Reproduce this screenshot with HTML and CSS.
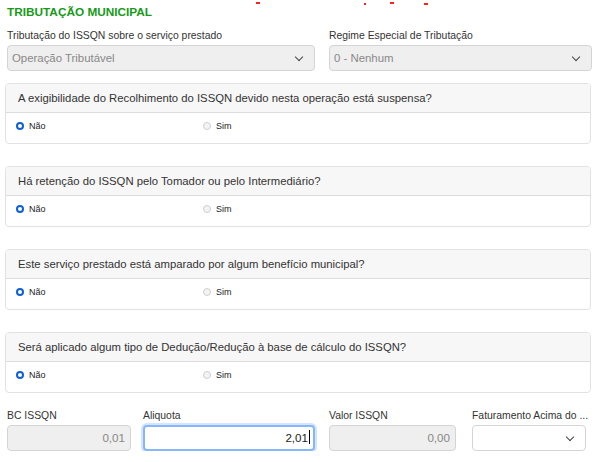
FILE: index.html
```html
<!DOCTYPE html>
<html>
	<head>
		<meta charset="utf-8">
		<title>Tributação Municipal</title>
		<link rel="stylesheet" href="styles.css">
	</head>
	<body>
		<div class="cut">
			<i class="d1"></i><i class="d2"></i><i class="d3"></i><i class="d4"></i>
		</div>
		<h3 class="titulo">TRIBUTAÇÃO MUNICIPAL</h3>

		<div class="linha1">
			<div class="campo">
				<label>Tributação do ISSQN sobre o serviço prestado</label>
				<div class="select disabled">Operação Tributável<span class="seta"></span></div>
			</div>
			<div class="campo">
				<label>Regime Especial de Tributação</label>
				<div class="select disabled">0 - Nenhum<span class="seta"></span></div>
			</div>
		</div>

		<div class="card">
			<div class="card-header">A exigibilidade do Recolhimento do ISSQN devido nesta operação está suspensa?</div>
			<div class="card-body">
				<span class="opt"><i class="radio on"></i>Não</span>
				<span class="opt"><i class="radio"></i>Sim</span>
			</div>
		</div>

		<div class="card">
			<div class="card-header">Há retenção do ISSQN pelo Tomador ou pelo Intermediário?</div>
			<div class="card-body">
				<span class="opt"><i class="radio on"></i>Não</span>
				<span class="opt"><i class="radio"></i>Sim</span>
			</div>
		</div>

		<div class="card">
			<div class="card-header">Este serviço prestado está amparado por algum benefício municipal?</div>
			<div class="card-body">
				<span class="opt"><i class="radio on"></i>Não</span>
				<span class="opt"><i class="radio"></i>Sim</span>
			</div>
		</div>

		<div class="card">
			<div class="card-header">Será aplicado algum tipo de Dedução/Redução à base de cálculo do ISSQN?</div>
			<div class="card-body">
				<span class="opt"><i class="radio on"></i>Não</span>
				<span class="opt"><i class="radio"></i>Sim</span>
			</div>
		</div>

		<div class="linha2">
			<div class="campo">
				<label>BC ISSQN</label>
				<div class="input disabled">0,01</div>
			</div>
			<div class="campo">
				<label>Aliquota</label>
				<div class="input foco">2,01<span class="caret"></span></div>
			</div>
			<div class="campo">
				<label>Valor ISSQN</label>
				<div class="input disabled">0,00</div>
			</div>
			<div class="campo">
				<label>Faturamento Acima do ...</label>
				<div class="select"><span class="seta"></span></div>
			</div>
		</div>
	</body>
</html>
```

FILE: styles.css
```css
body{
	margin: 0;
	padding: 0 12px 0 5px;
	font-family: "Liberation Sans", Arial, sans-serif;
	color: #333;
	background: #fff;
	position: relative;
}
.cut i{
	position: absolute;
	top: 2px;
	height: 2px;
	width: 4px;
	background: #f22;
}
.cut .d1{ left: 256px; }
.cut .d2{ left: 364px; width: 2px; top: 3px; }
.cut .d3{ left: 390px; }
.cut .d4{ left: 424px; top: 3px; }
.titulo{
	margin: 0;
	padding: 5px 0 0 2px;
	height: 18px;
	font-size: 11.8px;
	font-weight: bold;
	color: #179a19;
}
.linha1{
	display: grid;
	grid-template-columns: 308px 263px;
	column-gap: 14px;
	padding: 6px 0 0 2px;
}
.linha2{
	display: grid;
	grid-template-columns: 124px 172px 129px 118px;
	column-gap: 12px;
	padding: 16px 0 0 2px;
}
.linha2 .campo:nth-child(3){ margin-left: 2px; }
.linha2 .campo:nth-child(4){ margin-left: 4px; }
label{
	display: block;
	font-size: 10.4px;
	line-height: 14px;
	height: 16px;
	color: #333;
	white-space: nowrap;
}
.select, .input{
	box-sizing: border-box;
	height: 26px;
	border: 1px solid #d4d4d4;
	border-radius: 4px;
	font-size: 11.4px;
	line-height: 24px;
	padding: 0 4px;
	position: relative;
	background: #fff;
}
.disabled{
	background: #efefef;
	color: #888;
}
.input{
	text-align: right;
	font-size: 11.6px;
	padding: 0 5px;
}
.foco{
	border-color: #86b7fe;
	border-width: 2px;
	line-height: 22px;
	padding-right: 3px;
	color: #222;
	box-shadow: 0 0 0 2px rgba(13,110,253,.18);
}
.caret{
	display: inline-block;
	width: 1px;
	height: 14px;
	background: #000;
	vertical-align: -2px;
	margin-left: 1px;
}
.seta{
	position: absolute;
	right: 12px;
	top: 8px;
	width: 5px;
	height: 5px;
	border-right: 1.4px solid #444;
	border-bottom: 1.4px solid #444;
	transform: rotate(45deg);
}
.card{
	box-sizing: border-box;
	width: 586px;
	height: 61px;
	border: 1px solid #e2e2e2;
	border-radius: 4px;
	margin-top: 12px;
	overflow: hidden;
}
.card + .card{ margin-top: 22px; }
.card-header{
	height: 29px;
	box-sizing: border-box;
	background: #f7f7f7;
	border-bottom: 1px solid #dcdcdc;
	padding: 0 12px;
	font-size: 11.3px;
	line-height: 28px;
	color: #333;
}
.card-body{
	display: grid;
	grid-template-columns: 187px 187px;
	padding: 7px 0 0 10px;
	font-size: 9px;
	line-height: 12px;
	color: #222;
}
.opt{
	display: flex;
	align-items: center;
}
.radio{
	box-sizing: border-box;
	width: 8px;
	height: 8px;
	border-radius: 50%;
	border: 1px solid #d0d0d0;
	background: #f3f3f3;
	margin-right: 5px;
}
.radio.on{
	border: 2.5px solid #0d5fd8;
	background: #fff;
}
```
